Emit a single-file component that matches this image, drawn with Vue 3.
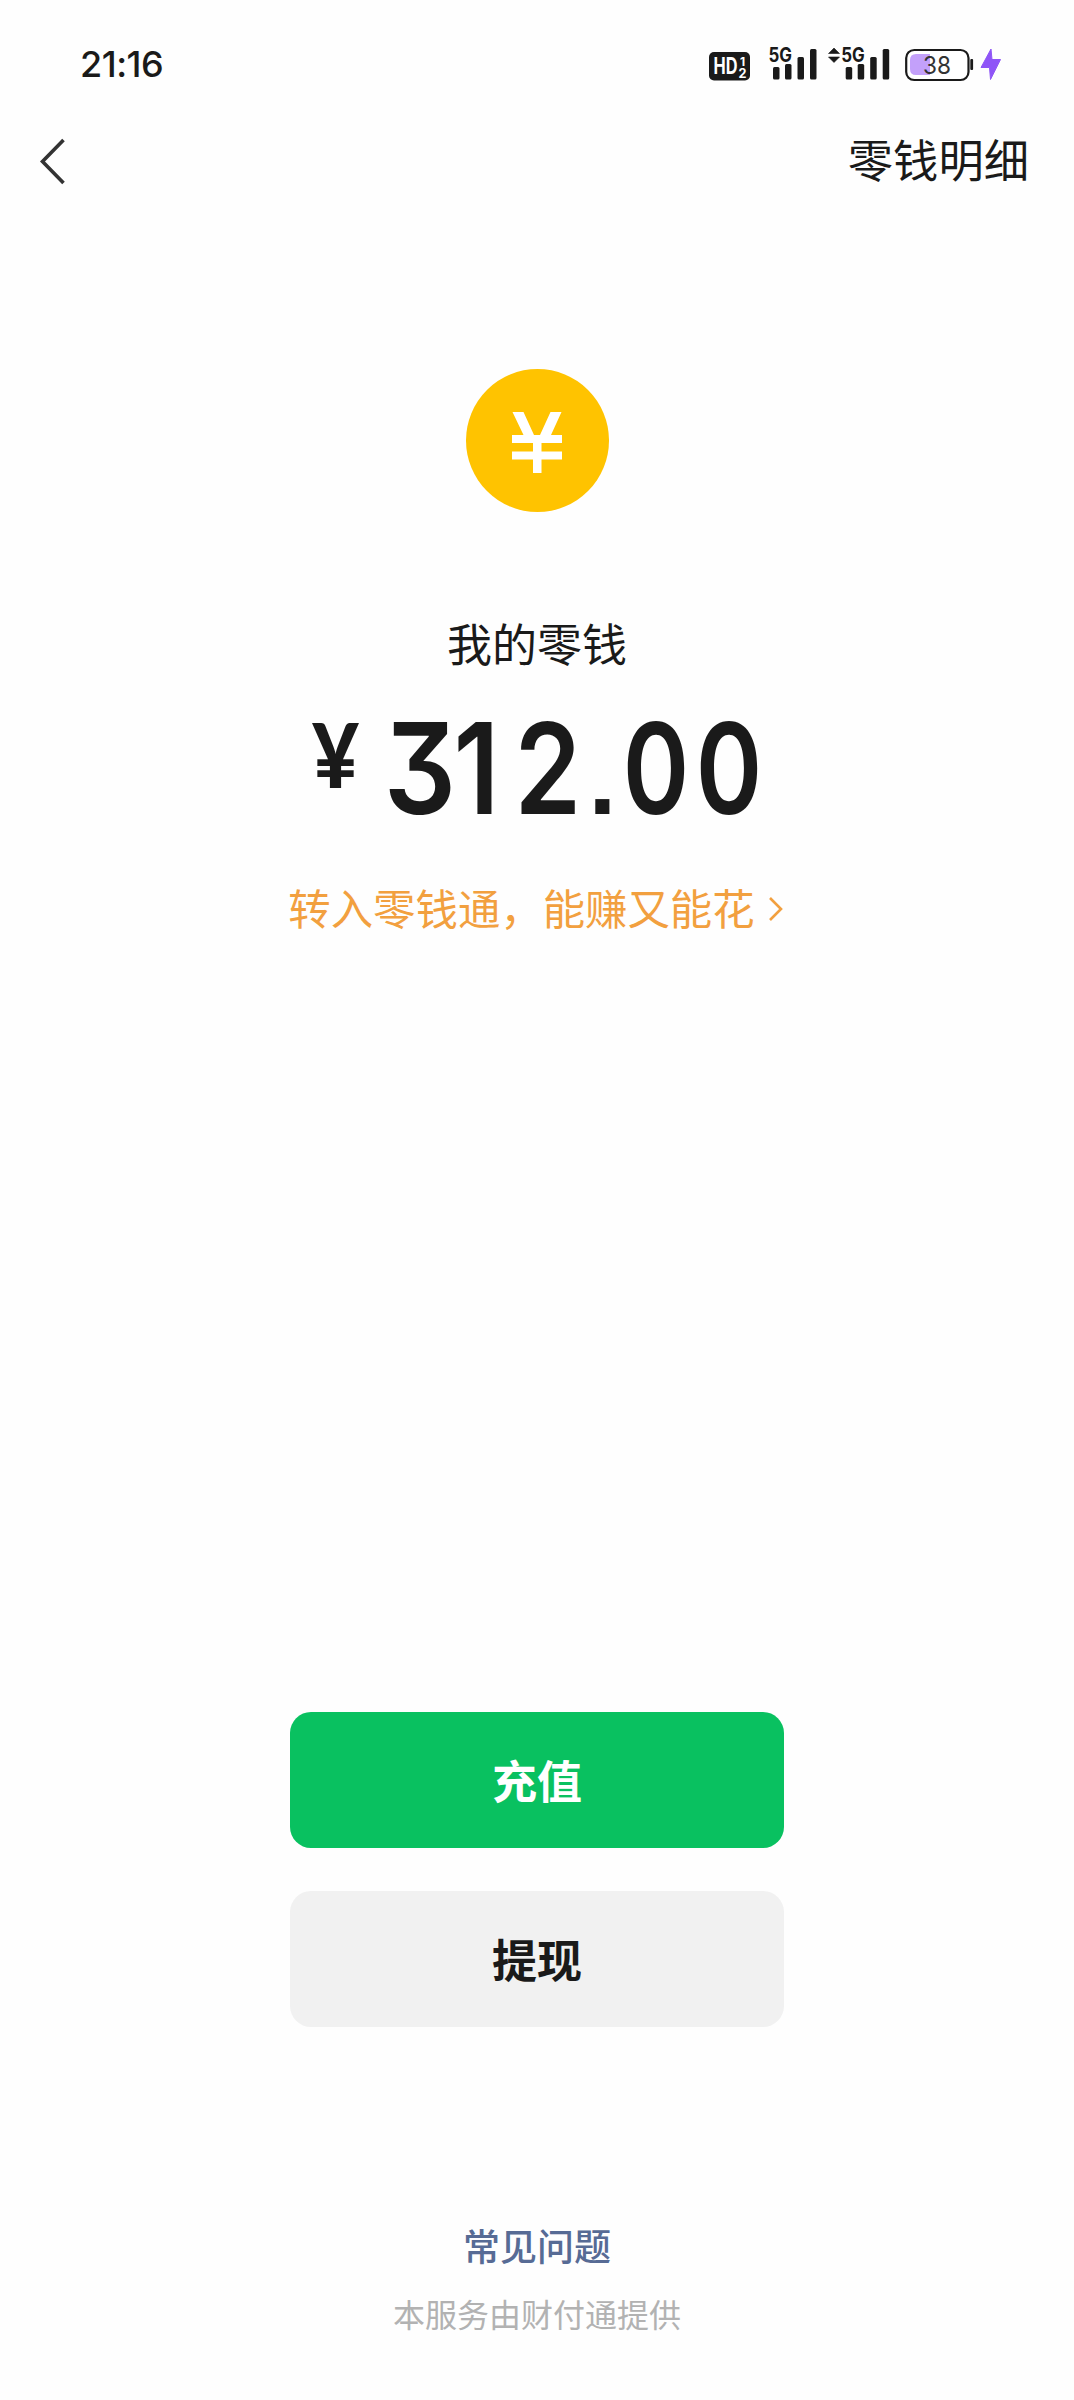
<script setup>
// Each glyph of the amount sits in its own cell with a width and a condensing factor.
const amount = [
  { char: '3', width: 72, scale: 0.9 },
  { char: '1', width: 41, scale: 0.86 },
  { char: '2', width: 102, scale: 0.85 },
  { char: '.', width: 7, scale: 1, point: true },
  { char: '0', width: 100, scale: 0.8 },
  { char: '0', width: 46, scale: 0.8 },
]
</script>

<template>
  <main class="page">
    <header class="status">
      <span class="time">21:16</span>
      <svg class="indicators" width="300" height="50" viewBox="0 0 300 50" fill="#1a1a1a">
        <rect x="0" y="12" width="41" height="28.5" rx="5" />
        <g fill="#fff" font-weight="700">
          <text x="4.5" y="34" font-size="22.5" textLength="24" lengthAdjust="spacingAndGlyphs">HD</text>
          <text x="31" y="25.500" font-size="12">1</text>
          <text x="29.500" y="37.500" font-size="13" textLength="8" lengthAdjust="spacingAndGlyphs">2</text>
        </g>
        <g id="cell">
          <text x="59.5" y="21.5" font-size="20" font-weight="700" textLength="23.5" lengthAdjust="spacingAndGlyphs">5G</text>
          <rect x="64" y="27" width="6.5" height="12.5" rx="1.5" />
          <rect x="76" y="24" width="6.5" height="15.5" rx="1.5" />
          <rect x="88.5" y="17" width="6.5" height="22.5" rx="1.5" />
          <rect x="101" y="9" width="6.5" height="30.5" rx="1.5" />
        </g>
        <use href="#cell" x="72.7" />
        <path d="M119.500 13.5 125 8 130.500 13.500ZM119.500 17 125 22.500 130.500 17Z" stroke="#1a1a1a" stroke-width=".6" stroke-linejoin="round" />
        <rect x="197.200" y="10" width="62.300" height="30" rx="8" fill="#fff" stroke="#1a1a1a" stroke-width="2.200" />
        <path d="M221 14v21h-14q-6 0-6-6v-9q0-6 6-6z" fill="#c3a0fa" />
        <rect x="261.300" y="19" width="2.800" height="11" rx="1" />
        <text x="214" y="33.500" font-size="24" fill="#333" textLength="28" lengthAdjust="spacingAndGlyphs">38</text>
        <path d="M282 9 272 27.500h8.500l1 12 10-20h-8.500z" fill="#8f55f7" stroke="#8f55f7" stroke-linejoin="round" />
      </svg>
    </header>
    <nav class="nav">
      <svg class="back" width="26" height="48" viewBox="0 0 26 48" fill="none" stroke="#333" stroke-width="3.600">
        <path d="M24.500 2 3.500 23.500l21 21.500" />
      </svg>
      <span class="nav-link">零钱明细</span>
    </nav>

    <section class="balance">
      <svg class="coin" width="143" height="143" viewBox="0 0 143 143">
        <circle cx="71.500" cy="71.500" r="71.500" fill="#ffc300" />
        <path d="M46.500 43H57.500L68 66H74L84.500 43H95.500L85 66H96V74H75.500V82.500H96V90.500H75.500V104H67V90.500H46V82.500H67V74H46V66H57.500Z" fill="#fff" />
      </svg>
      <h1 class="label">我的零钱</h1>
      <p class="amount">
        <span class="yen">¥</span>
        <span class="digits"><span v-for="(d, i) in amount" :key="i" class="digit" :class="{ point: d.point }" :style="{ width: d.width + 'px', transform: `scaleX(${d.scale})` }">{{ d.char }}</span></span>
      </p>
      <a class="promo">
        <span>转入零钱通，能赚又能花</span>
        <svg width="15" height="26" viewBox="0 0 15 26" fill="none" stroke="#f2a03f" stroke-width="2.600"><path d="M2 1 13 12 2 23" /></svg>
      </a>
    </section>

    <section class="actions">
      <button class="btn primary">充值</button>
      <button class="btn">提现</button>
    </section>

    <footer class="footer">
      <a class="faq">常见问题</a>
      <p class="provider">本服务由财付通提供</p>
    </footer>
  </main>
</template>

<style>
body { margin: 0; background: #fefefe; }
</style>

<style scoped>
.page {
  display: flex;
  flex-direction: column;
  width: 1074px;
  height: 2400px;
  color: #1a1a1a;
  background: #fefefe;
  font-family: Inter, "Noto Sans CJK SC", sans-serif;
}
.status {
  display: flex;
  justify-content: space-between;
  height: 100px;
  padding: 40px 65px 0 80px;
  box-sizing: border-box;
}
.time {
  font-size: 36px;
  font-weight: 500;
  line-height: 49px;
  letter-spacing: -0.5px;
}
.nav {
  display: flex;
  align-items: center;
  justify-content: space-between;
  height: 124px;
  padding: 0 45px 0 39px;
}
.nav-link { font-size: 45.300px; line-height: 60px; }
.balance {
  display: flex;
  flex-direction: column;
  align-items: center;
  padding-top: 145px;
}
.label {
  margin: 104px 0 0;
  font-size: 45px;
  font-weight: 400;
  line-height: 60px;
}
.amount {
  display: flex;
  align-items: flex-start;
  width: 450px;
  height: 150px;
  margin: 20px 0 0;
}
.yen {
  width: 72px;
  font-family: Lato, sans-serif;
  font-size: 90px;
  font-weight: 900;
  line-height: 115px;
  transform: scaleX(.9);
  transform-origin: left;
}
.digits {
  display: flex;
  align-items: baseline;
  font-size: 126px;
  font-weight: 600;
  line-height: 145px;
  font-feature-settings: "cv09" 1;
}
.digit {
  display: flex;
  justify-content: center;
}
.point {
  font: 700 100px/100px "Liberation Sans", sans-serif;
}
.promo {
  display: flex;
  align-items: center;
  gap: 13px;
  margin: 34px 3px 0 0;
  color: #f2a03f;
  font-size: 42.400px;
  line-height: 60px;
}
.actions {
  display: flex;
  flex-direction: column;
  align-items: center;
  gap: 43px;
  margin-top: 772px;
}
.btn {
  width: 494px;
  height: 136px;
  border: 0;
  border-radius: 21px;
  background: #f1f1f1;
  color: #1a1a1a;
  font: 700 45px/60px "Noto Sans CJK SC", sans-serif;
}
.primary { background: #09c160; color: #fff; }
.footer {
  display: flex;
  flex-direction: column;
  align-items: center;
  margin-top: 191px;
}
.faq { color: #576b95; font-size: 37px; font-weight: 500; line-height: 60px; }
.provider { margin: 8px 0 0; color: #b2b2b2; font-size: 32px; font-weight: 400; line-height: 60px; }
</style>
